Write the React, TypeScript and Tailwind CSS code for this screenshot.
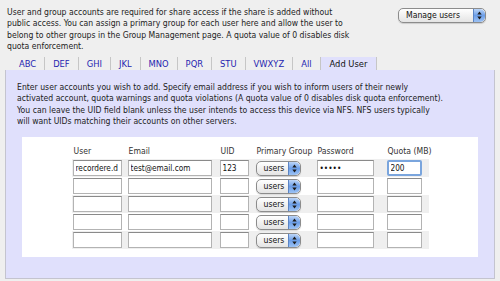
import React from 'react';

const tabs = ['ABC', 'DEF', 'GHI', 'JKL', 'MNO', 'PQR', 'STU', 'VWXYZ', 'All'];

type Row = { user: string; email: string; uid: string; pass: string; quota: string };

const rows: Row[] = [
  { user: 'recordere.d', email: 'test@email.com', uid: '123', pass: '•••••', quota: '200' },
  { user: '', email: '', uid: '', pass: '', quota: '' },
  { user: '', email: '', uid: '', pass: '', quota: '' },
  { user: '', email: '', uid: '', pass: '', quota: '' },
  { user: '', email: '', uid: '', pass: '', quota: '' },
];

// left padding + width of each column, so headers and fields line up
const cols = [
  { head: 'User', pad: 'pl-px', w: 'w-[49px]' },
  { head: 'Email', pad: 'pl-[6px]', w: 'w-[84px]' },
  { head: 'UID', pad: 'pl-[8px]', w: 'w-[29px]' },
  { head: 'Primary Group', pad: 'pl-[7px]', w: 'w-[45px]' },
  { head: 'Password', pad: 'pl-[16px]', w: 'w-[57px]' },
  { head: 'Quota (MB)', pad: 'pl-[13px] pr-[7px]', w: 'w-[35px]' },
];

function Stepper() {
  return (
    <div className="flex h-full w-[12px] items-center justify-center rounded-r-[5px] border-l border-[#5b84c4] bg-gradient-to-b from-[#bcd5f7] via-[#6c9ee8] to-[#9cc2f4]">
      <svg width="5" height="9" viewBox="0 0 5 9">
        <path d="M2.5 0.5 L4.7 3.5 L0.3 3.5 Z" fill="#1b1b1b" />
        <path d="M2.5 8.5 L4.7 5.5 L0.3 5.5 Z" fill="#1b1b1b" />
      </svg>
    </div>
  );
}

function Select({ label, className }: { label: string; className: string }) {
  return (
    <div
      className={`flex items-center justify-between overflow-hidden rounded-[5px] border border-[#8c8c8c] bg-gradient-to-b from-white to-[#e4e4e4] shadow-[0_1px_1px_rgba(0,0,0,0.15)] ${className}`}
    >
      <span className="pl-[7px] leading-none text-[#111]">{label}</span>
      <Stepper />
    </div>
  );
}

function Field({ value, focus }: { value: string; focus?: boolean }) {
  return (
    <input
      readOnly
      value={value}
      className={`block h-[16px] w-full bg-white px-[2px] text-[8.2px] text-[#111] outline-none ${
        focus
          ? 'rounded-[2px] border-2 border-[#7aa5dd]'
          : 'border border-[#b3b3b3] border-t-[#8a8a8a]'
      }`}
    />
  );
}

export default function App() {
  return (
    <div className="h-[281px] w-[500px] overflow-hidden bg-[#efefef] text-[8.6px] leading-[11.3px] text-[#222] [font-family:'DejaVu_Sans_Condensed','DejaVu_Sans',sans-serif]">
      <div className="flex items-start justify-between pl-[7px] pr-[14px] pt-[7px]">
        <p className="whitespace-nowrap">
          User and group accounts are required for share access if the share is added without
          <br />
          public access. You can assign a primary group for each user here and allow the user to
          <br />
          belong to other groups in the Group Management page. A quota value of 0 disables disk
          <br />
          quota enforcement.
        </p>
        <Select label="Manage users" className="mt-px h-[15px] w-[88px]" />
      </div>

      {/* Tabs */}
      <div className="ml-[11px] mt-[5px] flex h-[13px] items-stretch text-[9.3px]">
        {tabs.map((t) => (
          <div key={t} className="flex items-center border-r border-[#c6c6c6] px-[8px] text-[#2424b0]">
            {t}
          </div>
        ))}
        <div className="flex items-center border-r border-[#c6c6c6] bg-[#e0e0fc] px-[9px] text-[#111]">
          Add User
        </div>
      </div>

      {/* Panel */}
      <div className="mx-[5px] h-[209px] border-x border-b border-[#c4c4cf] bg-[#e0e0fc] px-[10px] pt-[12px]">
        <p className="whitespace-nowrap pl-px">
          Enter user accounts you wish to add. Specify email address if you wish to inform users of their newly
          <br />
          activated account, quota warnings and quota violations (A quota value of 0 disables disk quota enforcement).
          <br />
          You can leave the UID field blank unless the user intends to access this device via NFS. NFS users typically
          <br />
          will want UIDs matching their accounts on other servers.
        </p>

        <div className="mx-[6px] mt-[10px] bg-white pb-[8px] pt-[9px]">
          <div className="mx-auto w-fit">
            <div className="flex h-[13px] text-[#333]">
              {cols.map((c) => (
                <div key={c.head} className={c.pad}>
                  <div className={`${c.w} whitespace-nowrap pl-px`}>{c.head}</div>
                </div>
              ))}
            </div>
            {rows.map((r, i) => (
              <div
                key={i}
                className={`flex h-[18px] items-center ${i % 2 === 0 ? 'bg-[#efefef]' : 'bg-white'}`}
              >
                <div className={cols[0].pad}>
                  <div className={cols[0].w}>
                    <Field value={r.user} />
                  </div>
                </div>
                <div className={cols[1].pad}>
                  <div className={cols[1].w}>
                    <Field value={r.email} />
                  </div>
                </div>
                <div className={cols[2].pad}>
                  <div className={cols[2].w}>
                    <Field value={r.uid} />
                  </div>
                </div>
                <div className={cols[3].pad}>
                  <Select label="users" className="h-[15px] w-[45px]" />
                </div>
                <div className={cols[4].pad}>
                  <div className={cols[4].w}>
                    <Field value={r.pass} />
                  </div>
                </div>
                <div className={cols[5].pad}>
                  <div className={cols[5].w}>
                    <Field value={r.quota} focus={i === 0} />
                  </div>
                </div>
              </div>
            ))}
          </div>
        </div>
      </div>
    </div>
  );
}
